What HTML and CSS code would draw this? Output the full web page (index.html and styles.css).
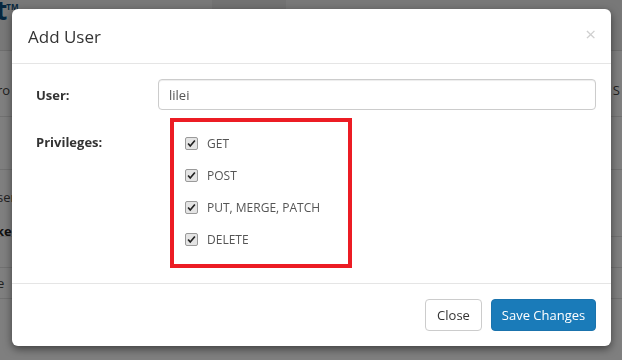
FILE: index.html
```html
<!DOCTYPE html>
<html>
  <head>
    <meta charset="UTF-8" />
    <title>Add User</title>
    <link rel="stylesheet" href="styles.css">
  </head>
  <body>
    <div class="page">
      <div class="page-header">
        <span class="logo">t<sup>TM</sup></span>
        <span class="nav-item active"></span>
      </div>
      <div class="page-row first"><span class="cell">ro</span><span class="cell right">S</span></div>
      <div class="page-row tall"></div>
      <div class="page-row double">
        <span class="cell">ser</span>
        <span class="cell bold">ke</span>
      </div>
      <div class="page-row short"></div>
      <div class="page-row"><span class="cell">e</span></div>
    </div>

    <div class="backdrop"></div>

    <div class="modal">
      <div class="modal-header">
        <h4 class="modal-title">Add User</h4>
        <span class="close">&times;</span>
      </div>

      <div class="modal-body">
        <div class="form-row">
          <label class="form-label" for="user-name">User:</label>
          <input type="text" id="user-name" class="form-input" value="lilei" />
        </div>
        <div class="form-row privileges">
          <label class="form-label">Privileges:</label>
          <div class="check-group">
            <label class="check"><input type="checkbox" checked /> GET</label>
            <label class="check"><input type="checkbox" checked /> POST</label>
            <label class="check"><input type="checkbox" checked /> PUT, MERGE, PATCH</label>
            <label class="check"><input type="checkbox" checked /> DELETE</label>
          </div>
        </div>
      </div>

      <div class="modal-footer">
        <button class="btn btn-default">Close</button>
        <button class="btn btn-primary">Save Changes</button>
      </div>
    </div>
  </body>
</html>
```

FILE: styles.css
```css
body {
  margin: 0;
  font-family: "Open Sans", Arial, sans-serif;
  font-size: 13px;
  color: #333;
  background: #fff;
  width: 622px;
  height: 360px;
  overflow: hidden;
}

/* page behind the dialog */
.page {
  width: 622px;
}
.page-header {
  height: 50px;
  background: #f0f0f0;
  border-bottom: 1px solid #ddd;
  display: flex;
  align-items: flex-start;
}
.logo {
  margin-left: -4px;
  margin-top: -8px;
  font-size: 26px;
  font-weight: bold;
  color: #0e4f7e;
  letter-spacing: -1px;
}
.logo sup {
  font-size: 8px;
  letter-spacing: 0;
}
.nav-item.active {
  width: 74px;
  height: 50px;
  margin-left: 194px;
  background: #e4e4e4;
}
.page-row {
  height: 30px;
  border-bottom: 1px solid #e2e2e2;
  display: flex;
  justify-content: space-between;
  align-items: center;
  font-size: 13px;
  color: #444;
}
.page-row.first {
  height: 66px;
  align-items: flex-start;
  padding-top: 30px;
  box-sizing: border-box;
}
.page-row.tall {
  height: 52px;
}
.page-row.double {
  height: 67px;
  flex-direction: column;
  align-items: flex-start;
  justify-content: flex-start;
  padding-top: 18px;
  box-sizing: border-box;
}
.page-row.short {
  height: 30px;
}
.cell {
  margin-left: -3px;
}
.cell.bold {
  margin-top: 16px;
  font-weight: bold;
  color: #222;
  margin-left: -4px;
}
.cell.right {
  margin-left: 0;
  margin-right: 2px;
}

.backdrop {
  position: fixed;
  inset: 0;
  background: rgba(0, 0, 0, 0.5);
}

/* dialog */
.modal {
  position: absolute;
  left: 12px;
  top: 9px;
  width: 599px;
  background: #fff;
  border-radius: 6px;
  box-shadow: 0 3px 9px rgba(0, 0, 0, 0.5);
}
.modal-header {
  display: flex;
  justify-content: space-between;
  align-items: center;
  height: 54px;
  padding: 0 15px 0 16px;
  border-bottom: 1px solid #e5e5e5;
}
.modal-title {
  margin: 0;
  font-size: 17px;
  font-weight: normal;
  color: #333;
}
.close {
  font-size: 19px;
  color: #cfcfcf;
  margin-top: -4px;
}

.modal-body {
  padding: 15px;
}
.form-row {
  display: grid;
  grid-template-columns: 131px 1fr;
  align-items: center;
}
.form-label {
  padding-left: 9px;
  font-weight: 700;
  color: #333;
}
.form-input {
  height: 31px;
  box-sizing: border-box;
  border: 1px solid #ccc;
  border-radius: 4px;
  padding: 6px 10px;
  font-family: inherit;
  font-size: 13px;
  color: #555;
  box-shadow: inset 0 1px 1px rgba(0, 0, 0, 0.075);
}

.privileges {
  margin-top: 8px;
  align-items: start;
}
.privileges .form-label {
  padding-top: 15px;
}
.check-group {
  justify-self: start;
  margin-left: 12px;
  width: 163px;
  border: 4px solid #ec1c24;
  padding: 5px 0 9px 11px;
  display: flex;
  flex-direction: column;
}
.check {
  height: 32px;
  display: flex;
  align-items: center;
  gap: 9px;
  font-size: 12px;
  color: #555;
  white-space: nowrap;
}
.check input {
  appearance: none;
  margin: 0;
  width: 13px;
  height: 13px;
  border: 1px solid #9a9a9a;
  border-radius: 2px;
  background-color: #e4e4e4;
  background-image: url('data:image/svg+xml,%3Csvg xmlns="http://www.w3.org/2000/svg" viewBox="0 0 13 13"%3E%3Cpath d="M2.5 6.5l2.5 3 5.5-6.5" fill="none" stroke="%23222" stroke-width="2"/%3E%3C/svg%3E');
  background-size: 11px;
  background-repeat: no-repeat;
  background-position: center;
}

.modal-footer {
  display: flex;
  justify-content: flex-end;
  gap: 9px;
  padding: 15px;
  border-top: 1px solid #e5e5e5;
}
.btn {
  height: 32px;
  padding: 0 6px;
  font-family: inherit;
  font-size: 13px;
  border-radius: 4px;
  border: 1px solid #ccc;
  white-space: nowrap;
}
.btn-default {
  width: 57px;
  background: #fff;
  color: #333;
}
.btn-primary {
  width: 105px;
  background: #1a7bb9;
  border-color: #1a73ad;
  color: #fff;
}
```
